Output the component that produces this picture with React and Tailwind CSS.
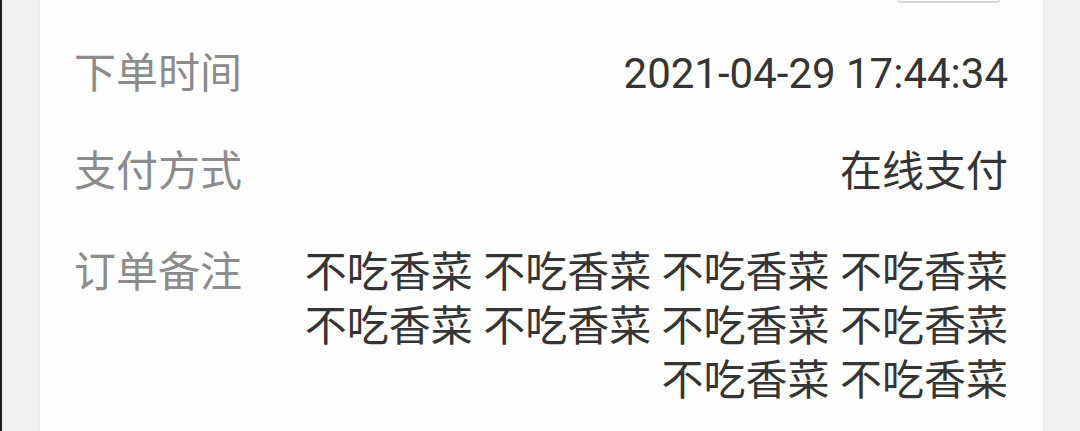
export default function App() {
  const notes = Array.from({ length: 10 }, () => "不吃香菜").join(" ");
  const font = { fontFamily: "Roboto, 'Noto Sans CJK SC', sans-serif" };
  return (
    <div
      className="flex h-[431px] w-[1080px] overflow-hidden bg-[#f1f1f1]"
      style={font}
    >
      <div className="w-[2px] shrink-0 bg-[#1c1c1c]" />
      <div className="ml-[38px] w-[1003px] shrink-0 bg-[#fefefe] pl-[34px] pr-[35px] shadow-[0_0_4px_rgba(0,0,0,0.04)]">
        {/* bottom edge of the action button in the section above */}
        <div className="flex justify-end pr-[8px]">
          <div className="h-[3px] w-[102px] rounded-b-[8px] border-x border-b-2 border-[#d6d6d6]" />
        </div>
        <div className="pt-[21px]">
          <div className="flex items-start justify-between py-[23px] leading-[54px]">
            <span className="shrink-0 text-[42px] text-[#8c8c8c]">下单时间</span>
            <span className="text-[42px] text-[#353535]">2021-04-29 17:44:34</span>
          </div>
          <div className="flex items-start justify-between pb-[24px] pt-[21px] leading-[54px]">
            <span className="shrink-0 text-[42px] text-[#8c8c8c]">支付方式</span>
            <span className="text-[42px] text-[#353535]">在线支付</span>
          </div>
          <div className="flex items-start justify-between py-[23px] leading-[54px]">
            <span className="shrink-0 text-[42px] text-[#8c8c8c]">订单备注</span>
            <p className="w-[704px] text-right text-[42px] text-[#353535]">{notes}</p>
          </div>
        </div>
      </div>
    </div>
  );
}
